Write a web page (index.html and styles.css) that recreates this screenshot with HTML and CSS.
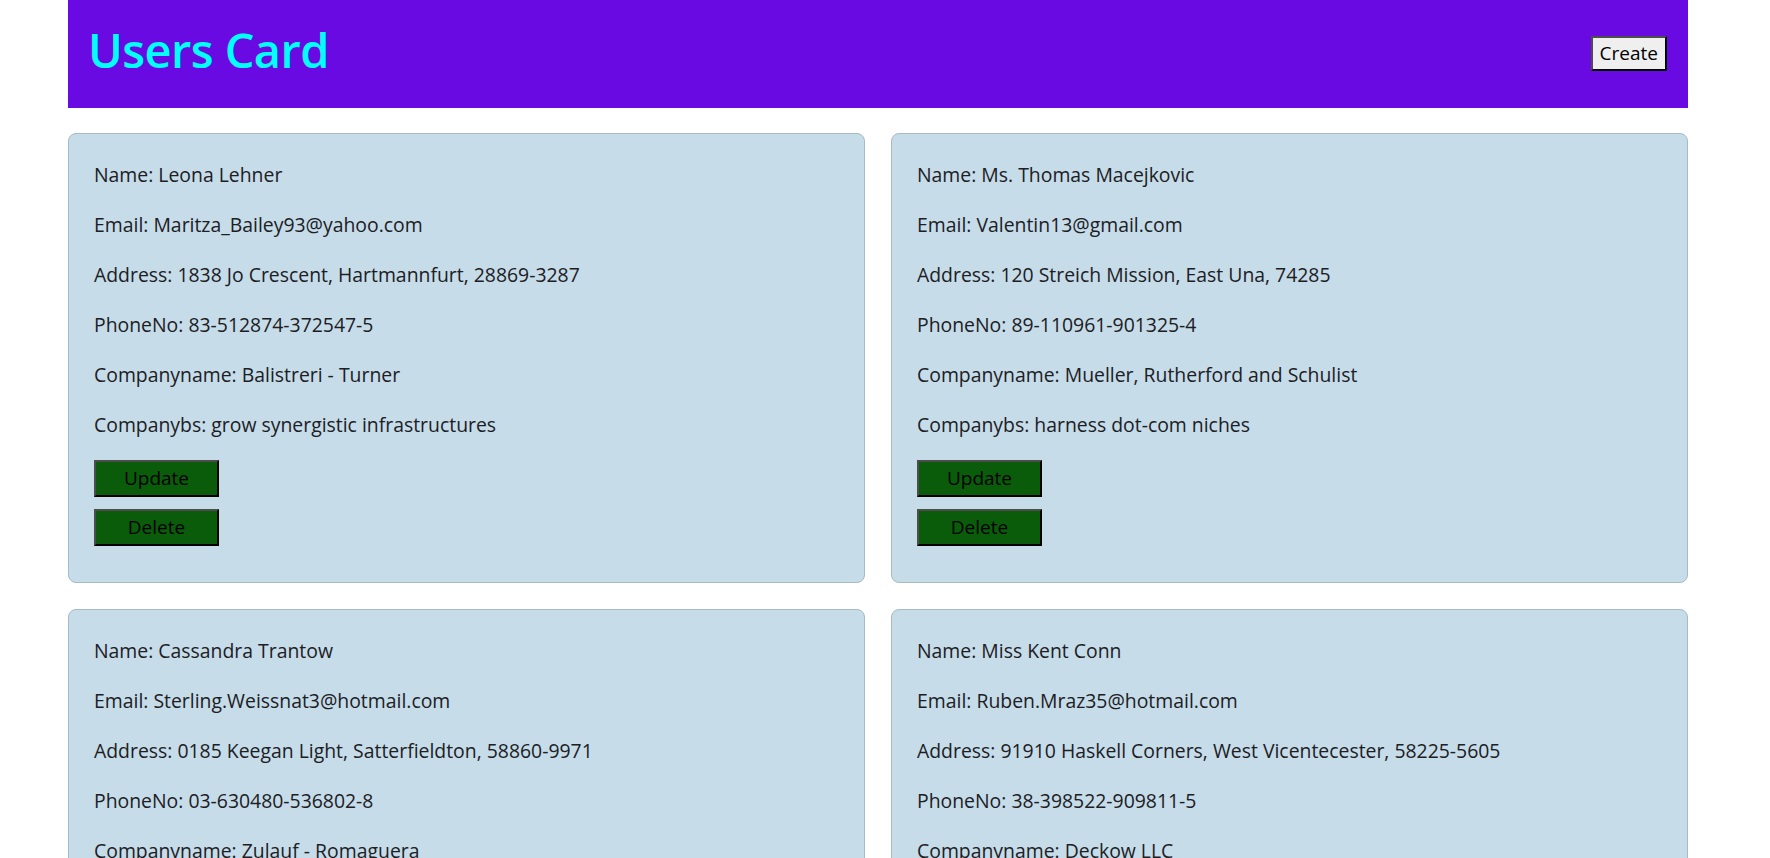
FILE: index.html
```html
<!DOCTYPE html>
<html>
<head>
<meta charset="utf-8">
<title>Users Card</title>
<link rel="stylesheet" href="styles.css">
</head>
<body>
<div class="container">
  <header class="topbar">
    <h1 class="title">Users Card</h1>
    <button class="btn-create">Create</button>
  </header>
  <main class="grid">
    <div class="card">
      <p>Name: Leona Lehner</p>
      <p>Email: Maritza_Bailey93@yahoo.com</p>
      <p>Address: 1838 Jo Crescent, Hartmannfurt, 28869-3287</p>
      <p>PhoneNo: 83-512874-372547-5</p>
      <p>Companyname: Balistreri - Turner</p>
      <p>Companybs: grow synergistic infrastructures</p>
      <button class="btn-green">Update</button>
      <button class="btn-green">Delete</button>
    </div>
    <div class="card">
      <p>Name: Ms. Thomas Macejkovic</p>
      <p>Email: Valentin13@gmail.com</p>
      <p>Address: 120 Streich Mission, East Una, 74285</p>
      <p>PhoneNo: 89-110961-901325-4</p>
      <p>Companyname: Mueller, Rutherford and Schulist</p>
      <p>Companybs: harness dot-com niches</p>
      <button class="btn-green">Update</button>
      <button class="btn-green">Delete</button>
    </div>
    <div class="card">
      <p>Name: Cassandra Trantow</p>
      <p>Email: Sterling.Weissnat3@hotmail.com</p>
      <p>Address: 0185 Keegan Light, Satterfieldton, 58860-9971</p>
      <p>PhoneNo: 03-630480-536802-8</p>
      <p>Companyname: Zulauf - Romaguera</p>
      <p>Companybs: iterate cutting-edge e-markets</p>
      <button class="btn-green">Update</button>
      <button class="btn-green">Delete</button>
    </div>
    <div class="card">
      <p>Name: Miss Kent Conn</p>
      <p>Email: Ruben.Mraz35@hotmail.com</p>
      <p>Address: 91910 Haskell Corners, West Vicentecester, 58225-5605</p>
      <p>PhoneNo: 38-398522-909811-5</p>
      <p>Companyname: Deckow LLC</p>
      <p>Companybs: enable B2B platforms</p>
      <button class="btn-green">Update</button>
      <button class="btn-green">Delete</button>
    </div>
  </main>
</div>
</body>
</html>
```

FILE: styles.css
```css
html, body {
  margin: 0;
  padding: 0;
  background: #ffffff;
}
body {
  font-family: "Open Sans", "Noto Sans", sans-serif;
  font-size: 19.4px;
  line-height: 30px;
  color: #1c2024;
}
.container {
  width: 1620px;
  margin-left: 68px;
}
.topbar {
  height: 108px;
  background: #690ae3;
  display: flex;
  align-items: center;
  justify-content: space-between;
  padding: 0 21px 0 20px;
  box-sizing: border-box;
}
.title {
  margin: 0 0 8px;
  color: #00ffff;
  font-size: 47px;
  font-weight: 600;
  line-height: 60px;
  letter-spacing: -0.6px;
}
.btn-create {
  font-family: inherit;
  font-size: 19px;
  line-height: 29px;
  height: 35px;
  box-sizing: border-box;
  color: #000;
  background: #efefef;
  padding: 0 7px;
  border-style: solid;
  border-width: 2px;
  border-color: #4d4d4d #000 #000 #4d4d4d;
  margin: 0 0 2px;
}
.grid {
  display: grid;
  grid-template-columns: 1fr 1fr;
  gap: 26px;
  margin-top: 25px;
}
.card {
  background: #c6dce9;
  border: 1px solid #a6bac8;
  border-radius: 8px;
  padding: 26px 25px 36px;
}
.card p {
  margin: 0 0 20px;
}
.btn-green {
  display: block;
  width: 125px;
  height: 37px;
  box-sizing: border-box;
  font-family: inherit;
  font-size: 19px;
  line-height: 29px;
  color: #000;
  background: #0a5c0a;
  padding: 0 6px;
  border-style: solid;
  border-width: 2px;
  border-color: #4d4d4d #000 #000 #4d4d4d;
  margin: 0;
}
.btn-green + .btn-green {
  margin-top: 12px;
}
```
